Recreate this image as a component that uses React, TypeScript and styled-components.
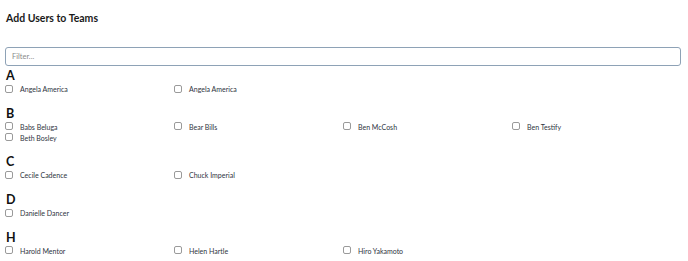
import styled, { createGlobalStyle } from "styled-components";

const GlobalStyle = createGlobalStyle`
  body {
    margin: 0;
    background: #fff;
    font-family: Lato, "Open Sans", sans-serif;
    color: #222;
  }
`;

type Group = { letter: string; users: string[] };

const groups: Group[] = [
  { letter: "A", users: ["Angela America", "Angela America"] },
  { letter: "B", users: ["Babs Beluga", "Bear Bills", "Ben McCosh", "Ben Testify", "Beth Bosley"] },
  { letter: "C", users: ["Cecile Cadence", "Chuck Imperial"] },
  { letter: "D", users: ["Danielle Dancer"] },
  { letter: "H", users: ["Harold Mentor", "Helen Hartle", "Hiro Yakamoto"] },
];

const App = () => {
  return (
    <Page>
      <GlobalStyle />
      <Title>Add Users to Teams</Title>
      <FilterInput placeholder="Filter..." />
      {groups.map((group) => (
        <Section key={group.letter}>
          <Letter>{group.letter}</Letter>
          <UserGrid>
            {group.users.map((name, i) => (
              <UserItem key={name + i}>
                <Box type="checkbox" />
                <Name>{name}</Name>
              </UserItem>
            ))}
          </UserGrid>
        </Section>
      ))}
    </Page>
  );
};

export default App;

const Page = styled.div`
  padding: 10px 7px 0 5px;
`;

const Title = styled.h1`
  margin: 0 0 0 1px;
  font-size: 10.5px;
  font-weight: 700;
  line-height: 16px;
  color: #1a1a1a;
`;

const FilterInput = styled.input`
  display: block;
  box-sizing: border-box;
  width: 100%;
  height: 19px;
  margin-top: 21px;
  padding: 0 6px;
  border: 1px solid #8ea2b6;
  border-radius: 3px;
  outline: none;
  font-family: Lato, sans-serif;
  font-size: 7.5px;
  color: #333;
  &::placeholder {
    color: #8a8a8a;
  }
`;

const Section = styled.section`
  margin-bottom: 12.7px;
`;

const Letter = styled.h2`
  margin: 3px 0 0 1px;
  font-size: 12.5px;
  font-weight: 700;
  line-height: 14px;
  color: #111;
`;

const UserGrid = styled.div`
  display: grid;
  grid-template-columns: repeat(4, 1fr);
`;

const UserItem = styled.label`
  display: flex;
  align-items: center;
  height: 11px;
`;

const Box = styled.input`
  box-sizing: border-box;
  width: 8px;
  height: 8px;
  margin: 0 7px 0 0;
  appearance: none;
  border: 1px solid #9a9a9a;
  border-radius: 2px;
  background: #fff;
`;

const Name = styled.span`
  font-size: 7px;
  color: #2e3440;
  position: relative;
  top: 0.5px;
`;
